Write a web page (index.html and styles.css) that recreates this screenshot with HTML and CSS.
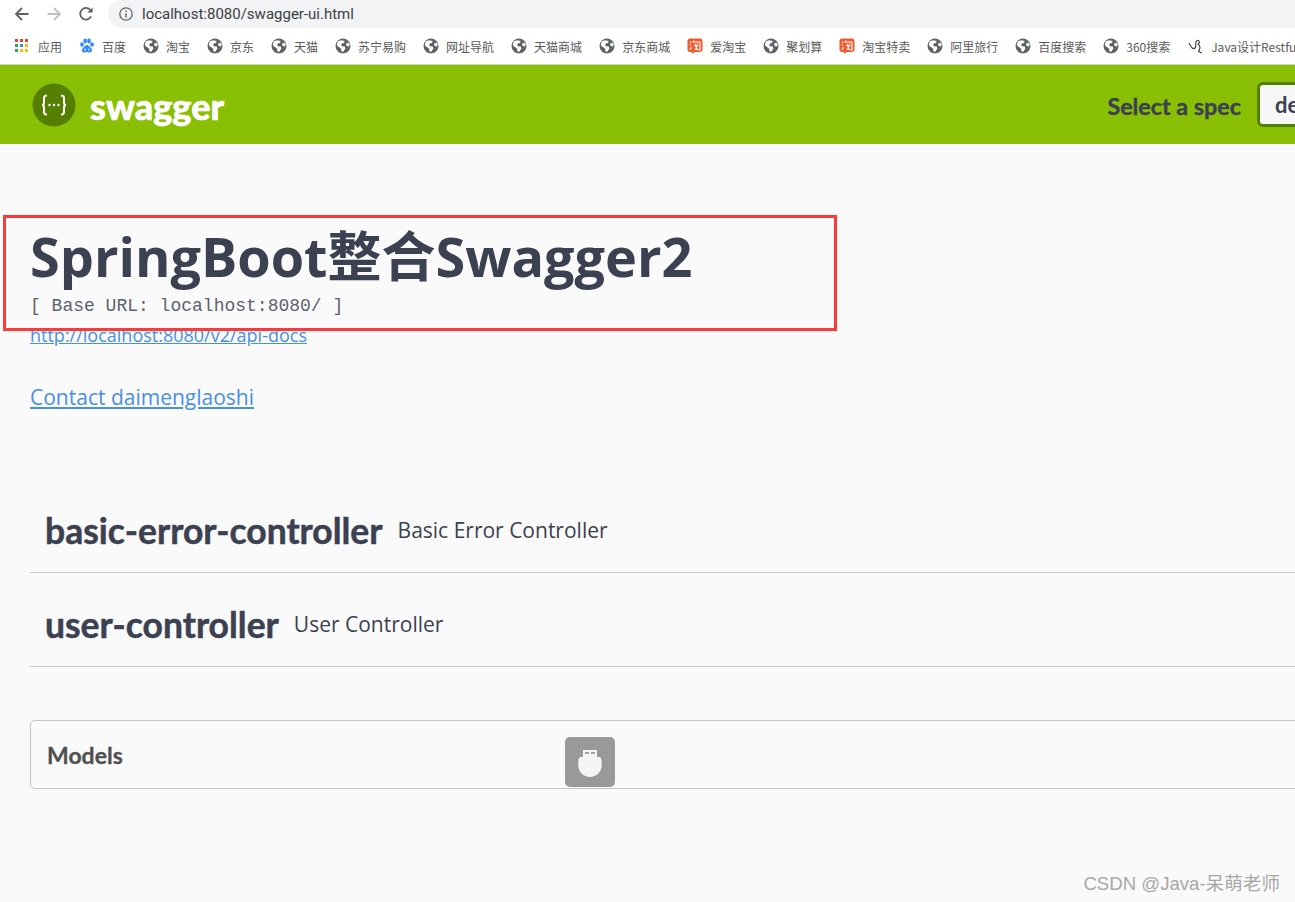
FILE: index.html
```html
<!DOCTYPE html>
<html lang="en">
<head>
    <meta charset="UTF-8">
    <meta name="viewport" content="width=device-width, initial-scale=1.0">
    <title>Swagger UI</title>
    <link rel="stylesheet" href="styles.css">
</head>
<body>
    <svg class="defs" xmlns="http://www.w3.org/2000/svg">
        <symbol id="globe" viewBox="0 0 16 16">
            <circle cx="8" cy="8" r="7.5" fill="#5f6368"/>
            <path d="M3 3.2L6.2 2.2L9.6 3L9 5L6.8 5.6L6.2 7.4L7.8 8.4L9.8 8.6L10.4 10.6L8.2 13.8L6.6 13.6L6 10.6L3.6 8.8L1.8 7.2Z" fill="#fff"/>
            <path d="M11.4 5.2L14 4.8L14.6 7.6L13 8.8L11.2 7.2Z" fill="#fff"/>
        </symbol>
        <symbol id="tao" viewBox="0 0 16 16">
            <path d="M3 0.5H13C14.5 0.5 15.5 1.5 15.5 3V11.5C15.5 13 14.5 14 13 14H7.5L5.5 16L5 14H3C1.5 14 0.5 13 0.5 11.5V3C0.5 1.5 1.5 0.5 3 0.5Z" fill="#f1592a"/>
            <path d="M3 3.5L4.6 4.6M2.6 6.6L4.2 7.6M2.8 12L4.6 9M7 2.5L6 5M6.4 4H13V12H11M8 6L8.6 7.4M10.6 5.6L10 7.4M7 8H11.6M9.3 8V11.2M7.6 11.4H11" stroke="#fff" stroke-width="1.1" fill="none"/>
        </symbol>
    </svg>

    <div class="toolbar">
        <svg class="nav-icon" viewBox="0 0 16 16"><path d="M14.5 8H2.5M8 2L2 8L8 14" fill="none" stroke="#5f6368" stroke-width="1.8"/></svg>
        <svg class="nav-icon" viewBox="0 0 16 16"><path d="M1.5 8H13.5M8 2L14 8L8 14" fill="none" stroke="#bdc1c6" stroke-width="1.8"/></svg>
        <svg class="nav-icon" viewBox="0 0 16 16"><path d="M13.2 10.4A5.8 5.8 0 1 1 12.6 4.2" fill="none" stroke="#5f6368" stroke-width="1.8"/><path d="M14.6 1.4V6.6H9.4Z" fill="#5f6368"/></svg>
        <div class="omnibox">
            <svg class="info-icon" viewBox="0 0 14 14"><circle cx="7" cy="7" r="6.2" fill="none" stroke="#5f6368" stroke-width="1.3"/><path d="M7 6.2V10.4M7 3.6V5" stroke="#5f6368" stroke-width="1.4"/></svg>
            <span class="url">localhost:8080/swagger-ui.html</span>
        </div>
    </div>

    <div class="bookmarks">
        <div class="bookmark">
            <svg class="apps-icon" viewBox="0 0 14 14">
                <rect x="0" y="0" width="3" height="3" fill="#ea4335"/><rect x="5" y="0" width="3" height="3" fill="#ea4335"/><rect x="10" y="0" width="3" height="3" fill="#ea4335"/>
                <rect x="0" y="5" width="3" height="3" fill="#34a853"/><rect x="5" y="5" width="3" height="3" fill="#4285f4"/><rect x="10" y="5" width="3" height="3" fill="#fbbc05"/>
                <rect x="0" y="10" width="3" height="3" fill="#34a853"/><rect x="5" y="10" width="3" height="3" fill="#fbbc05"/><rect x="10" y="10" width="3" height="3" fill="#fbbc05"/>
            </svg>
            应用
        </div>
        <div class="bookmark">
            <svg class="bm-icon" viewBox="0 0 16 16" fill="#3388ff">
                <ellipse cx="3" cy="6.5" rx="1.8" ry="2.3"/><ellipse cx="6.2" cy="3" rx="1.8" ry="2.4"/><ellipse cx="10" cy="3" rx="1.8" ry="2.4"/><ellipse cx="13" cy="6.5" rx="1.8" ry="2.3"/>
                <path d="M8 7C6 7 5.5 9 4 10C2.5 11 2.5 14.5 5 14.5C6.5 14.5 7 14 8 14C9 14 9.5 14.5 11 14.5C13.5 14.5 13.5 11 12 10C10.5 9 10 7 8 7Z"/>
                <path d="M6 10.5V13M10 10.5V13" stroke="#fff" stroke-width="0.9"/>
            </svg>
            百度
        </div>
        <div class="bookmark"><svg class="bm-icon"><use href="#globe"/></svg>淘宝</div>
        <div class="bookmark"><svg class="bm-icon"><use href="#globe"/></svg>京东</div>
        <div class="bookmark"><svg class="bm-icon"><use href="#globe"/></svg>天猫</div>
        <div class="bookmark"><svg class="bm-icon"><use href="#globe"/></svg>苏宁易购</div>
        <div class="bookmark"><svg class="bm-icon"><use href="#globe"/></svg>网址导航</div>
        <div class="bookmark"><svg class="bm-icon"><use href="#globe"/></svg>天猫商城</div>
        <div class="bookmark"><svg class="bm-icon"><use href="#globe"/></svg>京东商城</div>
        <div class="bookmark"><svg class="bm-icon"><use href="#tao"/></svg>爱淘宝</div>
        <div class="bookmark"><svg class="bm-icon"><use href="#globe"/></svg>聚划算</div>
        <div class="bookmark"><svg class="bm-icon"><use href="#tao"/></svg>淘宝特卖</div>
        <div class="bookmark"><svg class="bm-icon"><use href="#globe"/></svg>阿里旅行</div>
        <div class="bookmark"><svg class="bm-icon"><use href="#globe"/></svg>百度搜索</div>
        <div class="bookmark"><svg class="bm-icon"><use href="#globe"/></svg>360搜索</div>
        <div class="bookmark bookmark-last">
            <svg class="bm-icon" viewBox="0 0 16 16"><path d="M1 5C3 9 5 12 7 10C9 8 6 4 9 2.5C12 1.5 12 6 9.5 6.5M10 6.5C13 7.5 12 11 10.5 13.5L14 15" fill="none" stroke="#444" stroke-width="1.2"/></svg>
            Java设计Restful
        </div>
    </div>

    <div class="topbar">
        <div class="brand">
            <svg class="brand-logo" viewBox="0 0 44 44">
                <circle cx="22" cy="22" r="21.5" fill="#547f00"/>
                <path d="M15 12.5C12 12.5 12 14 12 16.5V19.5C12 21 11.5 22 10 22C11.5 22 12 23 12 24.5V27.5C12 30 12 31.5 15 31.5M29 12.5C32 12.5 32 14 32 16.5V19.5C32 21 32.5 22 34 22C32.5 22 32 23 32 24.5V27.5C32 30 32 31.5 29 31.5" fill="none" stroke="#fff" stroke-width="2"/>
                <circle cx="17.5" cy="22" r="1.2" fill="#fff"/><circle cx="22" cy="22" r="1.2" fill="#fff"/><circle cx="26.5" cy="22" r="1.2" fill="#fff"/>
            </svg>
            <span class="brand-name">swagger</span>
        </div>
        <div class="spec-select">
            <span class="spec-label">Select a spec</span>
            <div class="spec-box">default</div>
        </div>
    </div>

    <div class="main">
        <h2 class="title">SpringBoot整合Swagger2</h2>
        <pre class="base-url">[ Base URL: localhost:8080/ ]</pre>
        <a class="docs-link" href="#">http://localhost:8080/v2/api-docs</a>
        <a class="contact-link" href="#">Contact daimenglaoshi</a>

        <div class="tags">
            <div class="tag-row">
                <span class="tag-name">basic-error-controller</span>
                <span class="tag-desc">Basic Error Controller</span>
            </div>
            <div class="tag-row">
                <span class="tag-name">user-controller</span>
                <span class="tag-desc">User Controller</span>
            </div>
        </div>

        <div class="models">Models</div>
    </div>

    <div class="red-box"></div>
    <div class="usb-badge">
        <svg viewBox="0 0 50 50" width="50" height="50">
            <path d="M18 13H32V20H34C36 20 36.7 22 36.7 25V28C36.7 35 31.5 40 25 40C18.5 40 13.3 35 13.3 28V25C13.3 22 14 20 16 20H18Z" fill="#f5f5f5"/>
            <rect x="20" y="15" width="4" height="1.8" fill="#999"/><rect x="26" y="15" width="4" height="1.8" fill="#999"/>
        </svg>
    </div>
    <div class="watermark">CSDN @Java-呆萌老师</div>
</body>
</html>
```

FILE: styles.css
```css
* {
    margin: 0;
    padding: 0;
    box-sizing: border-box;
}

html, body {
    height: 100%;
    overflow: hidden;
}

body {
    background: #fafafa;
    font-family: 'Open Sans', 'Noto Sans CJK SC', sans-serif;
    color: #3b4151;
    position: relative;
}

.defs {
    display: none;
}

/* browser chrome */
.toolbar {
    height: 28px;
    background: #fff;
    display: flex;
    align-items: center;
    padding-left: 14px;
    gap: 16px;
}

.nav-icon {
    width: 16px;
    height: 16px;
    flex: none;
}

.omnibox {
    flex: 1;
    height: 28px;
    margin-left: -2px;
    background: #f1f3f4;
    border-radius: 14px 0 0 14px;
    display: flex;
    align-items: center;
    padding-left: 11px;
    gap: 9px;
}

.info-icon {
    width: 14px;
    height: 14px;
}

.url {
    font-family: 'Roboto', sans-serif;
    font-size: 15px;
    color: #3c4043;
}

.bookmarks {
    height: 37px;
    background: #fff;
    border-bottom: 1px solid #d0d0d0;
    display: flex;
    align-items: center;
    padding-left: 15px;
    gap: 17px;
    white-space: nowrap;
    font-family: 'Noto Sans CJK SC', sans-serif;
    font-size: 12px;
    color: #5a5a5a;
}

.bookmark {
    display: flex;
    align-items: center;
    gap: 7px;
    flex: none;
}

.bookmark-last {
    margin-left: 1px;
}

.bm-icon {
    width: 16px;
    height: 16px;
}

.apps-icon {
    width: 14px;
    height: 14px;
    margin-right: 2px;
}

/* swagger header */
.topbar {
    height: 79px;
    background: #89bf04;
    display: flex;
    align-items: center;
    justify-content: space-between;
    padding-left: 32px;
}

.brand {
    display: flex;
    align-items: center;
    gap: 14px;
}

.brand-logo {
    width: 44px;
    height: 44px;
}

.brand-name {
    font-family: 'Lato', sans-serif;
    font-weight: 900;
    font-size: 36px;
    color: #fff;
    -webkit-text-stroke: 0.6px #fff;
    padding-top: 2px;
}

.spec-select {
    display: flex;
    align-items: center;
    gap: 16px;
    margin-right: -60px;
}

.spec-label {
    font-family: 'Lato', sans-serif;
    font-weight: 700;
    font-size: 23.3px;
    -webkit-text-stroke: 0.4px #3b4151;
    padding-top: 2px;
}

.spec-box {
    width: 98px;
    height: 45px;
    border: 3px solid #547f00;
    border-radius: 6px;
    background: #f7f7f7;
    font-family: 'Lato', sans-serif;
    font-weight: 700;
    font-size: 22px;
    line-height: 39px;
    padding-left: 15px;
}

/* page content */
.main {
    padding: 76px 0 0 30px;
}

.title {
    font-size: 54px;
    font-weight: 700;
    line-height: 72px;
    font-family: 'Open Sans', 'Noto Sans CJK SC', sans-serif;
}

.base-url {
    font-family: 'Liberation Mono', monospace;
    font-size: 18px;
    line-height: 22px;
    margin-top: 3px;
    color: #5d6270;
}

.docs-link,
.contact-link {
    display: block;
    color: #4990e2;
    width: fit-content;
}

.docs-link {
    font-size: 18px;
    line-height: 24px;
    margin-top: 6px;
}

.contact-link {
    font-size: 21px;
    line-height: 28px;
    margin-top: 36px;
}

.tags {
    margin-top: 68px;
}

.tag-row {
    height: 94px;
    border-bottom: 1px solid #c8c8c8;
    display: flex;
    align-items: center;
    padding: 9px 0 0 15px;
    gap: 15px;
}

.tag-name {
    font-family: 'Lato', sans-serif;
    font-weight: 700;
    font-size: 35.5px;
    -webkit-text-stroke: 0.5px #3b4151;
}

.tag-desc {
    font-size: 21px;
}

.models {
    height: 69px;
    margin: 53px -10px 0 0;
    border: 1px solid #c4c4c4;
    border-radius: 5px;
    padding-left: 16px;
    font-family: 'Lato', sans-serif;
    font-weight: 700;
    font-size: 23px;
    line-height: 68px;
    color: #505050;
    -webkit-text-stroke: 0.3px #505050;
}

/* things lying over the page */
.red-box {
    position: absolute;
    left: 3px;
    top: 215px;
    width: 834px;
    height: 116px;
    border: 3px solid #fc3a3a;
}

.usb-badge {
    position: absolute;
    left: 565px;
    top: 737px;
    width: 50px;
    height: 50px;
    background: #999;
    border-radius: 5px;
}

.watermark {
    position: absolute;
    right: 15px;
    top: 868px;
    font-family: 'Liberation Sans', 'Noto Sans CJK SC', sans-serif;
    font-size: 18.6px;
    color: #a8a8a8;
}
```
